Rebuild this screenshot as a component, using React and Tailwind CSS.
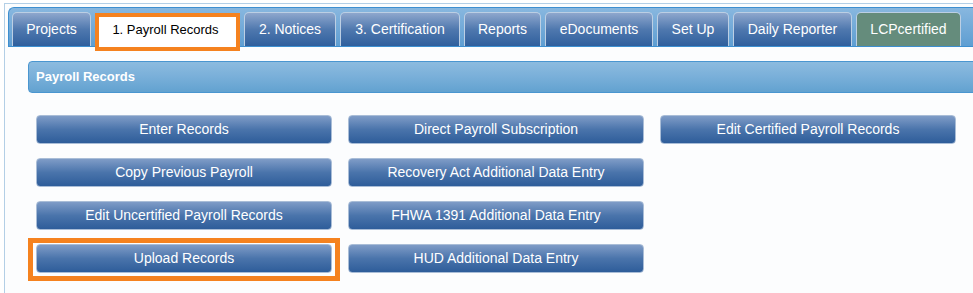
import React from "react";

const tabs = [
  { label: "Projects", w: "w-[79px]" },
  { label: "1. Payroll Records", w: "w-[145px]", active: true },
  { label: "2. Notices", w: "w-[92px]" },
  { label: "3. Certification", w: "w-[120px]" },
  { label: "Reports", w: "w-[77px]" },
  { label: "eDocuments", w: "w-[108px]" },
  { label: "Set Up", w: "w-[72px]" },
  { label: "Daily Reporter", w: "w-[119px]" },
  { label: "LCPcertified", w: "w-[105px]", green: true },
];

const buttons = [
  ["Enter Records", "Direct Payroll Subscription", "Edit Certified Payroll Records"],
  ["Copy Previous Payroll", "Recovery Act Additional Data Entry", null],
  ["Edit Uncertified Payroll Records", "FHWA 1391 Additional Data Entry", null],
  ["Upload Records", "HUD Additional Data Entry", null],
];

function Tab({ t }) {
  if (t.active) {
    return (
      <div
        className={`${t.w} relative z-10 -mb-[5px] flex h-[38px] shrink-0 items-center justify-center border-[4px] border-[#f5821f] bg-white pr-[4px] text-[13px] text-black`}
      >
        <span className="-mt-[5px]">{t.label}</span>
      </div>
    );
  }
  const bg = t.green
    ? "bg-[#658c7c]"
    : "bg-gradient-to-b from-[#8ea7cd] via-[#4f78ae] to-[#2f5f9d]";
  return (
    <div
      className={`${t.w} ${bg} flex h-[34px] shrink-0 items-center justify-center rounded-t-[5px] border border-b-0 border-[#bccfe4] text-[14px] text-white`}
    >
      {t.label}
    </div>
  );
}

function Btn({ label, highlight }) {
  return (
    <div className="relative h-[29px] w-[296px]">
      <div className="flex h-full w-full items-center justify-center rounded-[4px] border border-[#a9bdd7] bg-gradient-to-b from-[#7f9cc7] via-[#4a74ab] to-[#2e5d9a] text-[14px] text-white">
        {label}
      </div>
      {highlight && (
        <div className="pointer-events-none absolute -top-[6px] -bottom-[8px] -left-[8px] -right-[8px] border-[5px] border-[#f5821f]" />
      )}
    </div>
  );
}

export default function App() {
  return (
    <div className="h-[293px] w-[973px] overflow-hidden bg-white font-['Liberation_Sans',Arial,sans-serif]">
      <div className="ml-[4px] mt-[3px] h-[320px] w-[1000px] border-l border-t border-[#b3cfe6] bg-[#fcfdfe] pl-[3px] pt-[3px]">
        <div className="flex h-[40px] items-end gap-[4px] rounded-tl-[6px] border-b border-l border-t border-[#3d8fd0] bg-gradient-to-b from-[#88b7df] to-[#5e9ed2] pl-[3px]">
          {tabs.map((t) => (
            <Tab key={t.label} t={t} />
          ))}
        </div>
        <div className="ml-[20px] mt-[14px] flex h-[32px] items-center rounded-l-[4px] border border-[#4a96d0] bg-gradient-to-b from-[#8cbbdf] via-[#79afd9] to-[#62a2d0] pl-[7px] text-[13px] font-bold text-white">
          Payroll Records
        </div>
        <div className="ml-[28px] mt-[22px] grid w-[920px] grid-cols-[296px_296px_296px] gap-x-[16px] gap-y-[14px]">
          {buttons.map((row, ri) =>
            row.map((b, ci) =>
              b ? (
                <Btn key={`${ri}-${ci}`} label={b} highlight={b === "Upload Records"} />
              ) : (
                <div key={`${ri}-${ci}`} className="h-[29px]" />
              )
            )
          )}
        </div>
      </div>
    </div>
  );
}
